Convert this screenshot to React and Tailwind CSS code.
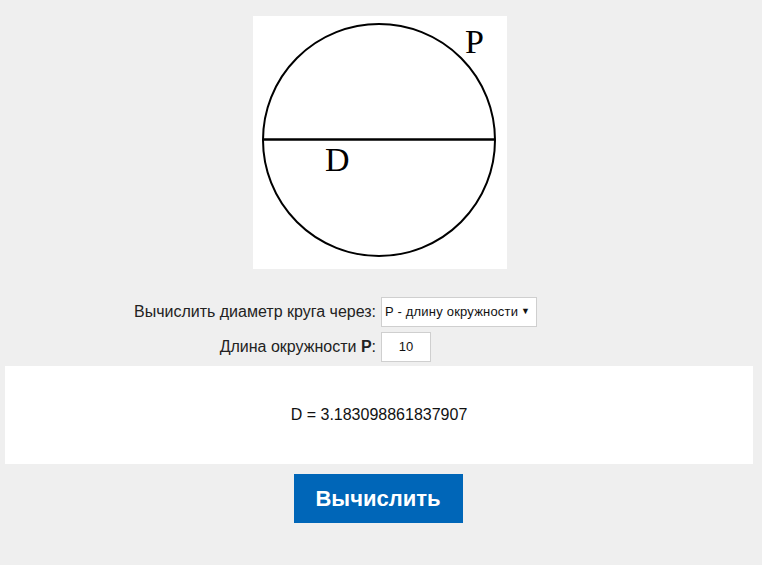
export default function App() {
  return (
    <div className="min-h-[565px] w-[762px] bg-[#efefef] pt-[16px] text-[#222] [font-family:'Liberation_Sans',Arial,sans-serif]">
      <div className="flex justify-center">
        <div className="ml-[-2px] h-[253px] w-[254px] bg-white">
          <svg width="254" height="253" viewBox="0 0 254 253">
            <circle cx="126" cy="124" r="116" fill="none" stroke="#000" strokeWidth="2" />
            <line x1="10" y1="123.5" x2="242" y2="123.5" stroke="#000" strokeWidth="2.5" />
            <text x="212" y="37" fontFamily="'Liberation Serif', 'Times New Roman', serif" fontSize="34" fill="#000">P</text>
            <text x="72" y="155" fontFamily="'Liberation Serif', 'Times New Roman', serif" fontSize="34" fill="#000">D</text>
          </svg>
        </div>
      </div>
      <div className="mt-[28px] grid grid-cols-2 gap-y-[5px]">
        <div className="flex items-center justify-end pr-[5px] text-[16px]">Вычислить диаметр круга через:</div>
        <div className="flex">
          <div className="flex h-[30px] w-[156px] items-center justify-between border border-[#cfcfcf] bg-white pl-[3px] pr-[6px] text-[13px] tracking-[0.2px] text-[#111]">
            <span>P - длину окружности</span>
            <span className="text-[9px]">▼</span>
          </div>
        </div>
        <div className="flex items-center justify-end pr-[5px] text-[16px]">
          <span>Длина окружности <b>P</b>:</span>
        </div>
        <div className="flex">
          <div className="flex h-[30px] w-[50px] items-center justify-center border border-[#cfcfcf] bg-white text-[13px] text-[#111]">10</div>
        </div>
      </div>
      <div className="mx-[5px] mt-[4px] flex h-[98px] w-[748px] items-center justify-center bg-white text-[16px] text-[#111]">
        D = 3.183098861837907
      </div>
      <div className="mt-[10px] flex justify-center">
        <button className="ml-[-6px] h-[49px] w-[169px] bg-[#0066b8] text-[22px] font-bold text-white">Вычислить</button>
      </div>
    </div>
  );
}
